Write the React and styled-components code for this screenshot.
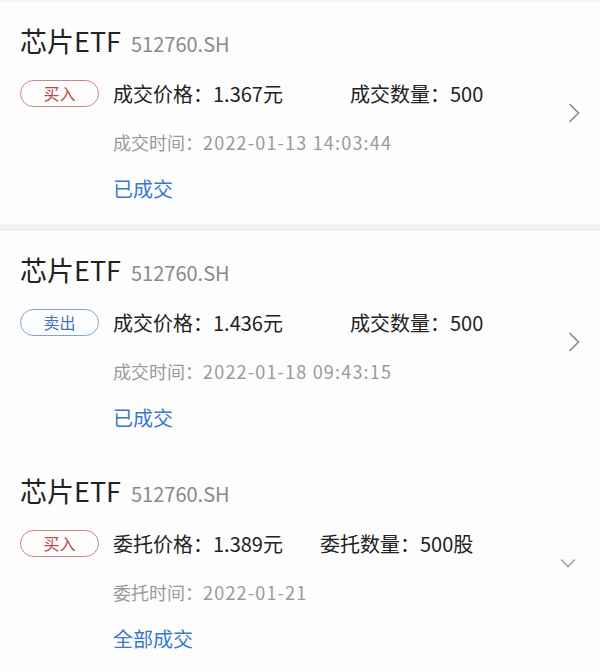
import React from 'react';
import styled, { createGlobalStyle } from 'styled-components';

const orders = [
    {
        side: 'buy',
        priceLabel: '成交价格',
        price: '1.367元',
        qtyLabel: '成交数量',
        qty: '500',
        timeLabel: '成交时间',
        time: '2022-01-13 14:03:44',
        status: '已成交',
        priceWidth: 237,
        arrow: 'right',
        bottom: 21,
        divider: true,
    },
    {
        side: 'sell',
        priceLabel: '成交价格',
        price: '1.436元',
        qtyLabel: '成交数量',
        qty: '500',
        timeLabel: '成交时间',
        time: '2022-01-18 09:43:15',
        status: '已成交',
        priceWidth: 237,
        arrow: 'right',
        bottom: 20,
        divider: false,
    },
    {
        side: 'buy',
        priceLabel: '委托价格',
        price: '1.389元',
        qtyLabel: '委托数量',
        qty: '500股',
        timeLabel: '委托时间',
        time: '2022-01-21',
        status: '全部成交',
        priceWidth: 207,
        arrow: 'down',
        bottom: 20,
        divider: false,
    },
];

const Chevron = ({ dir }) =>
    dir === 'down' ? (
        <svg width='16' height='10' viewBox='0 0 16 10'>
            <path d='M1 1.5 L8 8.5 L15 1.5' fill='none' stroke='#a3a3a3' strokeWidth='1.6' />
        </svg>
    ) : (
        <svg width='12' height='20' viewBox='0 0 12 20'>
            <path d='M1.5 1 L10.5 10 L1.5 19' fill='none' stroke='#8a8a8a' strokeWidth='1.6' />
        </svg>
    );

const OrderCard = ({ order }) => (
    <Card bottom={order.bottom} divider={order.divider}>
        <Content>
            <TitleRow>
                <Name>芯片ETF</Name>
                <Code>512760.SH</Code>
            </TitleRow>
            <Body>
                <SideBadge side={order.side}>{order.side === 'buy' ? '买入' : '卖出'}</SideBadge>
                <Details>
                    <InfoRow>
                        <Field width={order.priceWidth}>
                            {order.priceLabel}：{order.price}
                        </Field>
                        <Field>
                            {order.qtyLabel}：{order.qty}
                        </Field>
                    </InfoRow>
                    <TimeRow>
                        {order.timeLabel}：<TimeValue>{order.time}</TimeValue>
                    </TimeRow>
                    <Status>{order.status}</Status>
                </Details>
            </Body>
        </Content>
        <ArrowBox dir={order.arrow}>
            <Chevron dir={order.arrow} />
        </ArrowBox>
    </Card>
);

const App = () => (
    <>
        <GlobalStyle />
        <Page>
            {orders.map((o, i) => (
                <OrderCard key={i} order={o} />
            ))}
        </Page>
    </>
);

export default App;

// *** STYLES ***

const GlobalStyle = createGlobalStyle`
    body {
        margin: 0;
        background: #ffffff;
        font-family: "Noto Sans CJK SC", "Noto Sans", sans-serif;
    }
`;

const Page = styled.div`
    width: 600px;
    border-top: 2px solid #f5f5f5;
`;

const Card = styled.div`
    display: flex;
    align-items: center;
    padding: 21px 20px ${(p) => p.bottom}px 20px;
    background: #fdfdfd;
    border-bottom: ${(p) => (p.divider ? '7px solid #f1f1f1' : 'none')};
`;

const Content = styled.div`
    flex: 1;
    display: flex;
    flex-direction: column;
`;

const TitleRow = styled.div`
    display: flex;
    align-items: baseline;
    height: 36px;
    line-height: 36px;
`;

const Name = styled.span`
    font-size: 27px;
    color: #222;
`;

const Code = styled.span`
    margin-left: 10px;
    font-size: 20px;
    color: #8a8a8a;
`;

const Body = styled.div`
    display: flex;
    align-items: flex-start;
    margin-top: 21px;
`;

const SideBadge = styled.div`
    box-sizing: border-box;
    width: 79px;
    height: 27px;
    border-radius: 14px;
    border: 1px solid ${(p) => (p.side === 'buy' ? '#cf8585' : '#7fa3d4')};
    color: ${(p) => (p.side === 'buy' ? '#b94848' : '#3f73bd')};
    font-size: 16px;
    line-height: 25px;
    text-align: center;
`;

const Details = styled.div`
    margin-left: 14px;
    display: flex;
    flex-direction: column;
`;

const InfoRow = styled.div`
    display: flex;
    height: 28px;
    line-height: 28px;
    font-size: 20px;
    color: #222;
`;

const Field = styled.span`
    width: ${(p) => (p.width ? `${p.width}px` : 'auto')};
    white-space: nowrap;
`;

const TimeRow = styled.div`
    margin-top: 20px;
    height: 28px;
    line-height: 28px;
    font-size: 18px;
    color: #9a9a9a;
    white-space: nowrap;
`;

const TimeValue = styled.span`
    letter-spacing: 1.2px;
`;

const Status = styled.div`
    margin-top: 19px;
    height: 28px;
    line-height: 28px;
    font-size: 20px;
    color: #3b78cc;
`;

const ArrowBox = styled.div`
    display: flex;
    align-items: center;
    justify-content: center;
    margin-right: ${(p) => (p.dir === 'down' ? '4px' : '0')};
`;
